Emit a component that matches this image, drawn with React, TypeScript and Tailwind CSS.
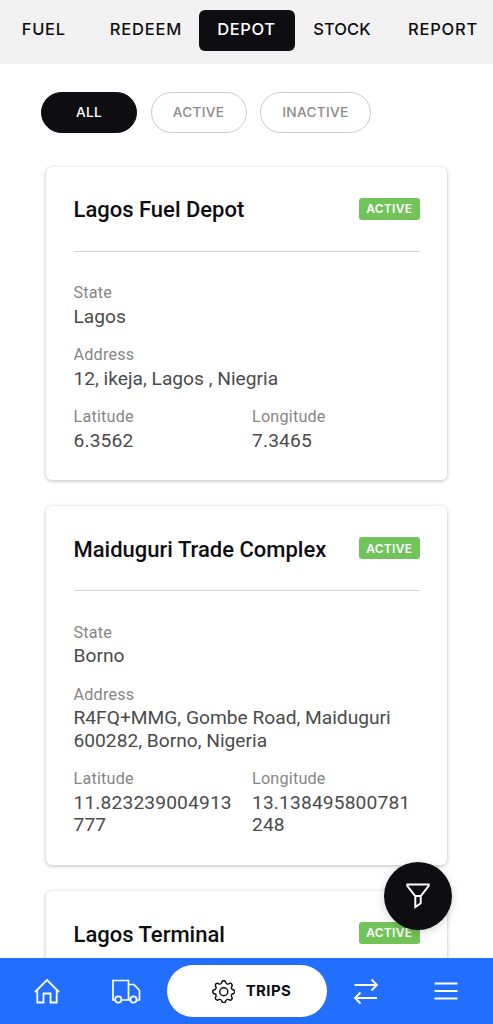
import clsx from "clsx";
import { BsGear } from "react-icons/bs";

type Depot = {
  name: string;
  state?: string;
  address?: string;
  latitude?: string;
  longitude?: string;
};

const tabs = [
  { label: "FUEL", className: "w-[87.5px] mr-[6px] tracking-[0.7px]" },
  { label: "REDEEM", className: "w-[105px] tracking-[0.8px]" },
  { label: "DEPOT", className: "w-[96px] tracking-[0.6px]", active: true },
  { label: "STOCK", className: "w-[95px] tracking-[0.1px]" },
  { label: "REPORT", className: "w-[107px] tracking-[0.8px]" },
];

const filters = [
  { label: "ALL", className: "w-24", active: true },
  { label: "ACTIVE", className: "w-24" },
  { label: "INACTIVE", className: "w-[111px]" },
];

const depots: Depot[] = [
  {
    name: "Lagos Fuel Depot",
    state: "Lagos",
    address: "12, ikeja, Lagos , Niegria",
    latitude: "6.3562",
    longitude: "7.3465",
  },
  {
    name: "Maiduguri Trade Complex",
    state: "Borno",
    address: "R4FQ+MMG, Gombe Road, Maiduguri 600282, Borno, Nigeria",
    latitude: "11.823239004913777",
    longitude: "13.138495800781248",
  },
  { name: "Lagos Terminal" },
];

function Field({ label, value, numeric }: { label: string; value?: string; numeric?: boolean }) {
  if (!value) return null;
  return (
    <div className="mb-[13.8px]">
      <div className="h-[25.7px] text-[16.2px] leading-[25px] tracking-[0.2px] text-[#868686]">{label}</div>
      <div
        className={clsx(
          "text-[19.2px] leading-[22.5px] text-[#4b4b4b]",
          numeric && "tracking-[0.15px] break-all"
        )}
      >
        {value}
      </div>
    </div>
  );
}

function DepotCard({ depot }: { depot: Depot }) {
  return (
    <div className="shrink-0 rounded-md bg-white px-[27.5px] pb-[14.2px] shadow-[0_1px_4px_rgba(0,0,0,0.27)]">
      <div className="flex h-[85px] items-center justify-between border-b border-[#d4d4d4]">
        <h2 className="pt-[2.5px] text-[22px] font-medium whitespace-nowrap text-[#0e0e12]">{depot.name}</h2>
        <span className="flex h-[22px] w-[60.5px] items-center justify-center rounded-[3px] bg-[#73c35b] pt-px font-[Inter] text-[12px] font-semibold tracking-[0.3px] text-white">
          ACTIVE
        </span>
      </div>
      <div className="pt-[28.5px]">
        <Field label="State" value={depot.state} />
        <Field label="Address" value={depot.address} />
        <div className="grid grid-cols-[160px_160px] gap-x-[18.5px]">
          <Field label="Latitude" value={depot.latitude} numeric />
          <Field label="Longitude" value={depot.longitude} numeric />
        </div>
      </div>
    </div>
  );
}

function HomeIcon() {
  return (
    <svg className="h-7 w-7" viewBox="0 0 28 28" fill="none" stroke="currentColor" strokeWidth="1.8">
      <path d="M2 15 14 3l12 12M4.3 13.5v12h6.2v-9h7v9h6.2v-12" />
    </svg>
  );
}

function TruckIcon() {
  return (
    <svg className="h-7 w-[30px]" viewBox="0 0 30 28" fill="none" stroke="currentColor" strokeWidth="1.7">
      <path d="M4.2 23H2V3.5h15.500V23h-7.100M17.500 7.500H23l5.500 6V23h-2.700M17.500 23h1.700" />
      <circle cx="7.3" cy="22.5" r="3.1" />
      <circle cx="22.5" cy="22.5" r="3.1" />
    </svg>
  );
}

function SwapIcon() {
  return (
    <svg className="h-7 w-7" viewBox="0 0 28 28" fill="none" stroke="currentColor" strokeWidth="1.8">
      <path d="M2.5 8H25M19.5 2.500 25 8l-5.500 5.500M25 21H3M8.500 15.500 3 21l5.500 5.500" />
    </svg>
  );
}

function MenuIcon() {
  return (
    <svg className="h-6 w-6" viewBox="0 0 24 24" stroke="currentColor" strokeWidth="1.8">
      <path d="M.5 4.500h23M.5 12h23M.5 19.500h23" />
    </svg>
  );
}

function FunnelIcon() {
  return (
    <svg className="h-7 w-7" viewBox="0 0 28 28" fill="none" stroke="currentColor" strokeWidth="2">
      <path d="M3.3 2.500h21.400v1.300L16.800 14h-5.600L3.300 3.800zM11.300 14v11l5.400-3.700V14" />
    </svg>
  );
}

export default function App() {
  return (
    <div className="relative flex h-[1024px] w-[493px] flex-col overflow-hidden bg-white font-[Roboto,sans-serif]">
      <nav className="flex h-16 shrink-0 bg-[#f1f1f1] pt-[9.5px] font-[Inter,sans-serif]">
        {tabs.map((tab) => (
          <button
            key={tab.label}
            className={clsx(
              "flex h-[41px] shrink-0 items-center justify-center rounded-md pb-[2px] text-[16.5px] font-medium",
              tab.active ? "bg-[#0e0e12] text-white" : "text-[#0e0e12]",
              tab.className
            )}
          >
            {tab.label}
          </button>
        ))}
      </nav>

      <div className="mt-[27.5px] flex shrink-0 gap-[13.5px] pl-[41px] font-[Inter,sans-serif]">
        {filters.map((filter) => (
          <button
            key={filter.label}
            className={clsx(
              "flex h-[41px] items-center justify-center rounded-full border pt-px text-[13.7px] font-medium tracking-[0.3px]",
              filter.active ? "border-[#0e0e12] bg-[#0e0e12] text-white" : "border-[#cbcbcb] text-[#8b8b8b]",
              filter.className
            )}
          >
            {filter.label}
          </button>
        ))}
      </div>

      <main className="mt-[34px] flex min-h-0 flex-1 flex-col gap-[26px] px-[46px]">
        {depots.map((depot) => (
          <DepotCard key={depot.name} depot={depot} />
        ))}
      </main>

      <button className="absolute top-[861.5px] left-[383.5px] flex h-[68.5px] w-[68.5px] items-center justify-center rounded-full bg-[#0e0e12] text-white shadow-[0_2px_8px_rgba(0,0,0,0.18)]">
        <FunnelIcon />
      </button>

      <footer className="relative flex h-[66.5px] shrink-0 items-center bg-[#216eff] text-white">
        <div className="flex w-[93px] justify-center">
          <HomeIcon />
        </div>
        <div className="flex w-[66px] justify-center">
          <TruckIcon />
        </div>
        <button className="ml-[7.5px] flex h-[52.5px] w-[160px] items-center justify-center gap-[10.5px] rounded-full bg-white pt-px pl-[10px] font-[Inter,sans-serif] text-[15px] font-bold tracking-[0.4px] text-[#0e0e12]">
          <BsGear className="h-[23.5px] w-[23.5px]" />
          TRIPS
        </button>
        <div className="flex w-[79px] justify-center">
          <SwapIcon />
        </div>
        <div className="flex w-[81px] justify-center">
          <MenuIcon />
        </div>
      </footer>
    </div>
  );
}
